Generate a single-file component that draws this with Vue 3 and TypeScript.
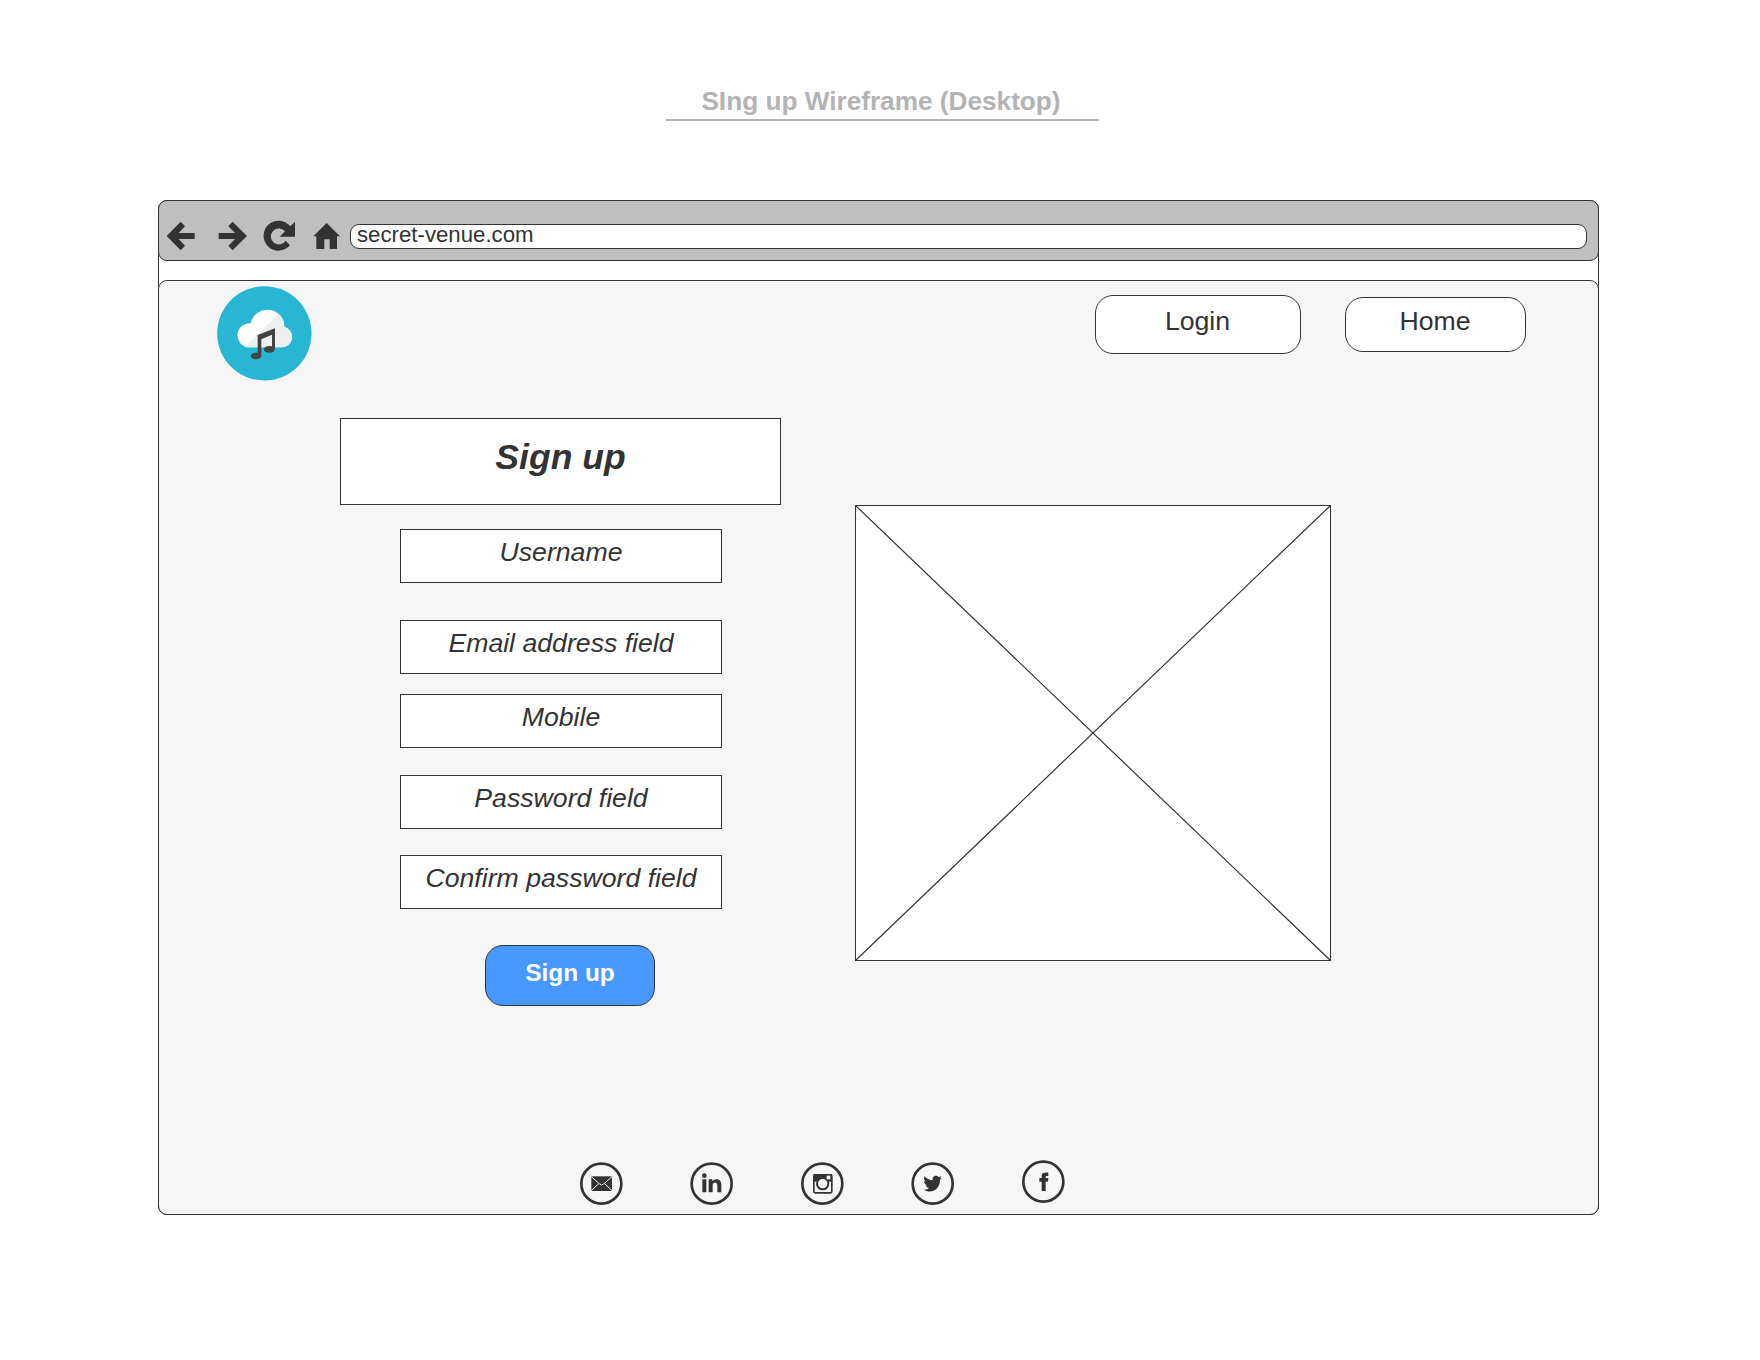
<script setup lang="ts">
interface Field {
  label: string
  gap: number
  lineHeight: number
}

const fields: Field[] = [
  { label: 'Username', gap: 24, lineHeight: 45 },
  { label: 'Email address field', gap: 37, lineHeight: 44 },
  { label: 'Mobile', gap: 20, lineHeight: 45 },
  { label: 'Password field', gap: 27, lineHeight: 45 },
  { label: 'Confirm password field', gap: 26, lineHeight: 45 },
]
</script>

<template>
  <div class="page">
    <h1 class="title">SIng up Wireframe (Desktop)</h1>

    <div class="browser">
      <header class="toolbar">
        <svg class="controls" width="184" height="40" viewBox="27 87 552 120">
          <g fill="#333">
            <path d="M50 138 92 95 105 109 86 129H134V147H86L105 167 92 181Z" />
            <path d="M291 138 248 95 235 109 255 129H206V147H255L235 167 248 181Z" />
            <path d="M435 95V140H389L405 124A24 24 0 1 0 407 152L420 166A45 45 0 1 1 421 109Z" />
            <path d="M530 99 570 139H561V177H539V148H523V177H499V139H490Z" />
          </g>
        </svg>
        <div class="address">secret-venue.com</div>
      </header>

      <main class="panel">
        <nav class="nav">
          <svg class="logo" width="95" height="95" viewBox="50 47 285 285">
            <circle cx="192" cy="189" r="141.5" fill="#28b6d5" />
            <g transform="translate(-2 0)">
              <path d="M146 231A36 36 0 1 1 153 159A51 51 0 0 1 254 170A31 31 0 0 1 246 231Z" fill="#fff" />
              <path d="M237 130Q254 145 254 170A31 31 0 0 1 246 231H136Z" fill="#eef0f0" />
              <g fill="#434343">
                <path d="M174 194 226 174V236H217V193L185 207V257H174Z" />
                <ellipse cx="169" cy="257" rx="16" ry="10" />
                <ellipse cx="209" cy="237" rx="16.500" ry="10" />
              </g>
            </g>
          </svg>
          <a class="pill login">Login</a>
          <a class="pill home">Home</a>
        </nav>

        <div class="content">
          <form class="form">
            <h2 class="heading">Sign up</h2>
            <div
              v-for="field in fields"
              :key="field.label"
              class="field"
              :style="{ marginTop: field.gap + 'px', lineHeight: field.lineHeight + 'px' }"
            >
              {{ field.label }}
            </div>
            <button type="button" class="submit">Sign up</button>
          </form>

          <svg class="placeholder" width="476" height="456" viewBox="0 0 476 456">
            <rect x=".5" y=".5" width="475" height="455" fill="#fff" stroke="#333" />
            <path d="M.5 .5 475.500 455.500M475.500 .5 .5 455.500" fill="none" stroke="#333" stroke-width="1.2" />
          </svg>
        </div>

        <footer class="social">
          <svg width="43" height="43" viewBox="0 0 129 129">
            <circle cx="64" cy="65" r="60" />
            <path class="solid" d="M34 43H96V87H34Z" />
            <path class="cut" d="M34 44 59 66Q65 71 71 66L96 44M34 86 56 65M96 86 74 65" />
          </svg>
          <svg width="43" height="43" viewBox="0 0 129 129">
            <circle cx="65" cy="65" r="60" />
            <circle class="solid" cx="43" cy="41" r="7" />
            <path class="solid" d="M37 52H49V91H37ZM56 52H67V58C74 48 94 49 94 68V91H82V70C82 58 68 59 68 70V91H56Z" />
          </svg>
          <svg width="43" height="43" viewBox="0 0 129 129">
            <circle cx="64" cy="65" r="60" />
            <rect x="38.500" y="38.500" width="54" height="54" rx="4" fill="none" stroke="#333" stroke-width="5" />
            <path class="solid" d="M38 36H93V59H38Z" />
            <circle cx="65" cy="65" r="17" fill="#f6f6f6" stroke="#333" stroke-width="6" />
            <rect x="77" y="41" width="11" height="11" fill="#f6f6f6" />
          </svg>
          <svg width="43" height="43" viewBox="0 0 129 129">
            <circle cx="65" cy="65" r="60" />
            <path
              class="solid"
              d="M92 47Q88 49 86 49Q90 46 91 42Q87 45 83 45C74 37 63 44 65 55Q50 54 41 43Q36 53 44 59Q41 59 39 57Q39 66 48 70Q45 71 43 70Q46 77 54 78Q47 84 38 83C60 96 87 84 87 54Q90 51 92 47Z"
            />
          </svg>
          <svg class="raised" width="43" height="43" viewBox="0 0 129 129">
            <circle cx="64" cy="65" r="60" />
            <path class="solid" d="M59 93V65H52V54H59V48C59 39 65 37 79 38V48H74Q71 48 71 52V54H79L78 65H71V93Z" />
          </svg>
        </footer>
      </main>
    </div>
  </div>
</template>

<style>
body {
  margin: 0;
  background: #fff;
}
</style>

<style scoped>
.page {
  box-sizing: border-box;
  width: 1760px;
  height: 1360px;
  padding-top: 80px;
  font-family: 'Liberation Sans', Arial, sans-serif;
  color: #333;
}

.page * {
  box-sizing: border-box;
}

.title {
  width: 433px;
  height: 41px;
  margin: 0 0 0 666px;
  padding-right: 3px;
  border-bottom: 2px solid #b3b3b3;
  font-size: 26.2px;
  line-height: 42px;
  text-align: center;
  white-space: nowrap;
  color: #b3b3b3;
}

.browser {
  width: 1441px;
  height: 1015px;
  margin: 79px 0 0 158px;
  border: 1px solid #333;
  border-radius: 9px;
  background: #fff;
}

.toolbar {
  display: flex;
  align-items: flex-start;
  width: 1441px;
  height: 61px;
  margin: -1px 0 0 -1px;
  border: 1px solid #333;
  border-radius: 9px;
  background: #bfbfbf;
}

.controls {
  flex: none;
  margin: 18px 0 0 0;
}

.address {
  width: 1237px;
  height: 25px;
  margin: 23px 0 0 7px;
  padding-left: 6px;
  border: 1px solid #333;
  border-radius: 9px;
  background: #fff;
  font-size: 22.22px;
  line-height: 20px;
}

.panel {
  display: flex;
  flex-direction: column;
  width: 1441px;
  height: 935px;
  margin: 19px 0 0 -1px;
  border: 1px solid #333;
  border-radius: 9px;
  background: #f6f6f6;
}

.nav {
  display: flex;
  align-items: flex-start;
  height: 137px;
}

.logo {
  margin: 5px 0 0 58px;
}

.pill {
  border: 1px solid #333;
  background: #fff;
  border-radius: 18px;
  font-size: 26.67px;
  text-align: center;
}

.login {
  width: 206px;
  height: 59px;
  margin: 14px 0 0 783px;
  padding-right: 1px;
  line-height: 50px;
}

.home {
  width: 181px;
  height: 55px;
  margin: 16px 0 0 44px;
  padding-right: 1px;
  line-height: 46px;
}

.content {
  display: flex;
  align-items: flex-start;
  height: 744px;
}

.form {
  display: flex;
  flex-direction: column;
  align-items: center;
  width: 441px;
  margin-left: 181px;
}

.heading {
  width: 441px;
  height: 87px;
  margin: 0;
  border: 1px solid #333;
  background: #fff;
  font-size: 35.56px;
  font-style: italic;
  line-height: 76px;
  text-align: center;
}

.field {
  width: 322px;
  height: 54px;
  margin-left: 1px;
  border: 1px solid #333;
  background: #fff;
  font-size: 26.67px;
  font-style: italic;
  text-align: center;
  white-space: nowrap;
}

.submit {
  width: 170px;
  height: 61px;
  margin: 36px 0 0 19px;
  padding: 0 0 6px;
  border: 1px solid #333;
  border-radius: 18px;
  background: #4799ff;
  color: #fff;
  font: bold 24.44px 'Liberation Sans', Arial, sans-serif;
}

.placeholder {
  margin: 87px 0 0 74px;
}

.social {
  display: flex;
  gap: 67.600px;
  margin-left: 420.600px;
}

.social svg > circle:first-child {
  fill: none;
  stroke: #333;
  stroke-width: 8;
}

.solid {
  fill: #333;
}

.cut {
  fill: none;
  stroke: #f6f6f6;
  stroke-width: 3;
}

.raised {
  margin-top: -2px;
}
</style>
